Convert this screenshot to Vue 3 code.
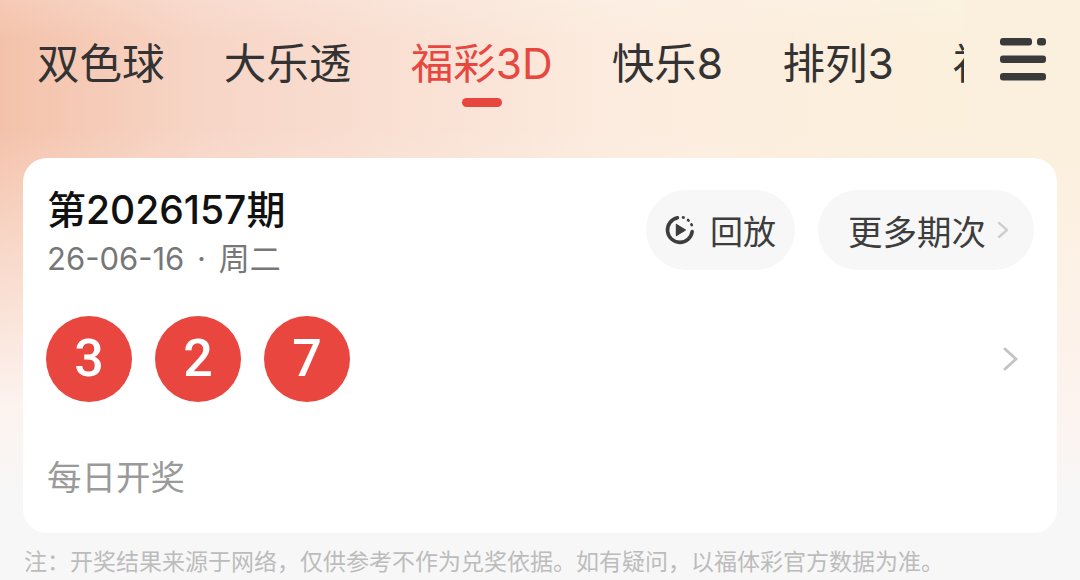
<script setup>
const tabs = [
  { label: '双色球' },
  { label: '大乐透' },
  { label: '福彩3D', active: true },
  { label: '快乐8' },
  { label: '排列3' },
  { label: '福彩' },
]
const balls = ['3', '2', '7']
</script>

<template>
  <div class="page">
    <header class="topbar">
      <nav class="tabs">
        <div v-for="t in tabs" :key="t.label" class="tab" :class="{ active: t.active }">
          {{ t.label }}
          <i v-if="t.active" class="indicator"></i>
        </div>
      </nav>
      <div class="menu" aria-label="menu">
        <svg width="47" height="43" viewBox="0 0 47 43">
          <rect x="0" y="0" width="32" height="7.5" rx="3" fill="#3a3a3a" />
          <rect x="37" y="0" width="9" height="7.5" rx="3" fill="#3a3a3a" />
          <rect x="0" y="17.5" width="46" height="7.5" rx="3" fill="#3a3a3a" />
          <rect x="0" y="35" width="46" height="7.5" rx="3" fill="#3a3a3a" />
        </svg>
      </div>
    </header>

    <section class="card">
      <div class="head">
        <div class="issue">
          <div class="title">第2026157期</div>
          <div class="date">26-06-16 · 周二</div>
        </div>
        <div class="actions">
          <div class="pill replay">
            <svg width="32" height="32" viewBox="0 0 32 32" fill="none">
              <path d="M13.4 3.8 A12.4 12.4 0 1 0 28.2 17.6" stroke="#3d3d3d" stroke-width="3.6" stroke-linecap="round" />
              <path d="M12.4 10.4 L21.4 16 L12.4 21.6 Z" fill="#3d3d3d" stroke="#3d3d3d" stroke-width="1.2" stroke-linejoin="round" />
              <path d="M19 3.4 L19.6 3.6 M24 6 L24.6 6.6 M27.4 10.4 L27.8 11.2" stroke="#3d3d3d" stroke-width="2.6" stroke-linecap="round" />
            </svg>
            <span>回放</span>
          </div>
          <div class="pill more">
            <span>更多期次</span>
            <svg width="14" height="20" viewBox="0 0 14 20" fill="none">
              <path d="M3 3 L11 10 L3 17" stroke="#cfcfcf" stroke-width="2.4" stroke-linecap="round" stroke-linejoin="round" />
            </svg>
          </div>
        </div>
      </div>

      <div class="balls-row">
        <div class="balls">
          <div v-for="(b, i) in balls" :key="i" class="ball">{{ b }}</div>
        </div>
        <svg width="18" height="26" viewBox="0 0 18 26" fill="none">
          <path d="M3 3 L14 13 L3 23" stroke="#c4c4c4" stroke-width="3" stroke-linecap="round" stroke-linejoin="round" />
        </svg>
      </div>

      <div class="schedule">每日开奖</div>
    </section>

    <footer class="note">注：开奖结果来源于网络，仅供参考不作为兑奖依据。如有疑问，以福体彩官方数据为准。</footer>
  </div>
</template>

<style>
html, body { margin: 0; background: #f7f7f7; }
</style>

<style scoped>
.page {
  width: 1080px;
  height: 580px;
  overflow: hidden;
  font-family: "Inter", "Noto Sans CJK SC", sans-serif;
  background:
    linear-gradient(180deg, rgba(253,243,239,0) 22%, #fdf3ef 70%, #f7f7f7 86%),
    linear-gradient(180deg, rgba(255,255,255,.14) 0, rgba(255,255,255,0) 40px),
    linear-gradient(90deg, #f4c2aa 0, #f7d5c6 200px, #f9e0d3 400px, #fcecdf 620px, #fbf0dc 960px);
}
.topbar {
  display: flex;
  height: 158px;
}
.tabs {
  display: flex;
  gap: 59.3px;
  width: 964px;
  height: 130px;
  padding-left: 37px;
  box-sizing: border-box;
  overflow: hidden;
  flex: none;
}
.tab {
  flex: none;
  position: relative;
  height: 130px;
  line-height: 127px;
  font-size: 42.5px;
  color: #333;
  white-space: nowrap;
}
.tab.active { color: #e8473f; }
.indicator {
  position: absolute;
  left: 50%;
  top: 98px;
  width: 40px;
  height: 9px;
  margin-left: -20px;
  border-radius: 5px;
  background: #e8473f;
}
.menu {
  flex: none;
  width: 116px;
  height: 130px;
  padding: 38px 0 0 36px;
  box-sizing: border-box;
  background: #fbf0de;
}
.menu svg { display: block; }
.card {
  margin: 0 23px;
  height: 375px;
  box-sizing: border-box;
  background: #fff;
  border-radius: 24px;
  padding: 27px 23px 0 24px;
}
.head {
  display: flex;
  justify-content: space-between;
  align-items: flex-start;
}
.title {
  font-size: 39px;
  line-height: 50px;
  color: #111;
  font-weight: 500;
}
.date {
  font-size: 31px;
  line-height: 46px;
  color: #777;
  word-spacing: 4px;
  margin-top: 1px;
}
.actions {
  display: flex;
  gap: 23px;
  margin-top: 5px;
}
.pill {
  height: 80px;
  border-radius: 40px;
  background: #f7f7f7;
  display: flex;
  align-items: center;
  color: #3d3d3d;
  box-sizing: border-box;
}
.replay { width: 149px; padding-left: 18px; gap: 14px; font-size: 33px; }
.more { width: 216px; padding-left: 30px; gap: 10px; font-size: 34.5px; }
.balls-row {
  display: flex;
  justify-content: space-between;
  align-items: center;
  margin-top: 34px;
  padding-right: 14px;
}
.balls { display: flex; gap: 23px; margin-left: -1px; }
.ball {
  width: 86px;
  height: 86px;
  border-radius: 50%;
  background: #e9463f;
  color: #fff;
  font-family: "Roboto", sans-serif;
  font-weight: 500;
  font-size: 52px;
  line-height: 86px;
  text-align: center;
}
.schedule {
  margin-top: 52px;
  font-size: 34.5px;
  line-height: 48px;
  color: #9a9a9a;
}
.note {
  margin: 14px 0 0 24px;
  font-size: 23px;
  line-height: 30px;
  color: #bcbcbc;
  white-space: nowrap;
}
</style>
